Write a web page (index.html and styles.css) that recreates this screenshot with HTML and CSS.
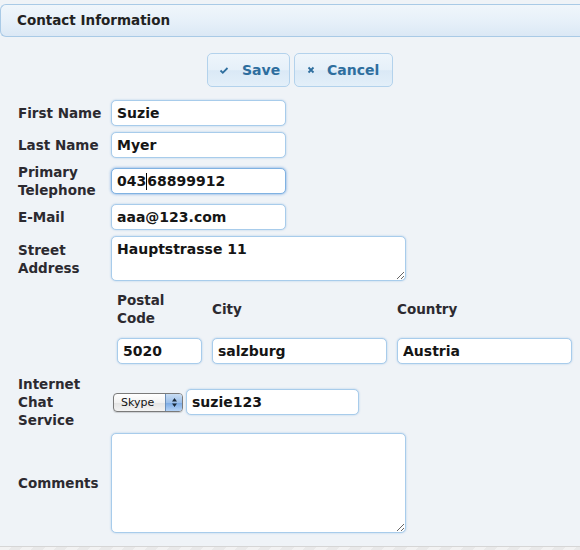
FILE: index.html
```html
<!DOCTYPE html>
<html>
<head>
<meta charset="utf-8">
<link rel="stylesheet" href="styles.css">
</head>
<body>
<div class="header">Contact Information</div>
<div class="toolbar">
  <button class="btn save"><svg class="ico" width="16" height="16" viewBox="0 0 16 16"><path d="M4.5 8.5 L6.8 10.8 L11.5 6" fill="none" stroke="#2e6e9e" stroke-width="1.8"/></svg><span>Save</span></button>
  <button class="btn cancel"><svg class="ico" width="16" height="16" viewBox="0 0 16 16"><path d="M5.5 5.5 L10.5 10.5 M10.5 5.5 L5.5 10.5" fill="none" stroke="#2e6e9e" stroke-width="1.8"/></svg><span>Cancel</span></button>
</div>
<form class="form">
  <div class="row"><label class="label">First Name</label><input class="field" value="Suzie"></div>
  <div class="row"><label class="label">Last Name</label><input class="field" value="Myer"></div>
  <div class="row r2"><label class="label">Primary<br>Telephone</label><div class="field focus">043<span class="caret"></span>68899912</div></div>
  <div class="row"><label class="label">E-Mail</label><input class="field" value="aaa@123.com"></div>
  <div class="row"><label class="label">Street<br>Address</label><textarea class="area short">Hauptstrasse 11</textarea></div>
  <div class="address">
    <label class="sublabel">Postal<br>Code</label>
    <label class="sublabel">City</label>
    <label class="sublabel">Country</label>
    <input class="field wide" value="5020">
    <input class="field wide" value="salzburg">
    <input class="field wide" value="Austria">
  </div>
  <div class="row rchat"><label class="label">Internet<br>Chat<br>Service</label>
    <div class="chat">
      <div class="select"><span class="sel-text">Skype</span><span class="sel-arrows"><svg width="7" height="11" viewBox="0 0 7 11"><path d="M3.5 1 L6 4.5 L1 4.5 Z M3.5 10 L6 6.5 L1 6.5 Z" fill="#1a2a3a"/></svg></span></div>
      <input class="field chatfield" value="suzie123">
    </div>
  </div>
  <div class="row"><label class="label">Comments</label><textarea class="area tall"></textarea></div>
</form>
<div class="footer"></div>
</body>
</html>
```
FILE: styles.css
```css
html, body {
  margin: 0;
  padding: 0;
  background: #eff3f7;
  overflow: hidden;
  font-family: "DejaVu Sans", Verdana, sans-serif;
}
body {
  padding-top: 4px;
}
.header {
  height: 31px;
  line-height: 31px;
  border: 1px solid #a9cae6;
  border-right: none;
  border-radius: 6px 0 0 6px;
  background: linear-gradient(#f0f6fb, #e6f0f9 55%, #dbe8f5);
  padding-left: 16px;
  font-weight: bold;
  font-size: 13.5px;
  color: #222;
}
.toolbar {
  display: flex;
  justify-content: center;
  gap: 4px;
  margin-top: 16px;
  padding-left: 20px;
}
.btn {
  box-sizing: border-box;
  height: 34px;
  display: flex;
  align-items: center;
  gap: 10px;
  padding: 0 0 0 8px;
  border: 1px solid #b3d2ec;
  border-radius: 5px;
  background: linear-gradient(#eef5fb, #e6f0f9 50%, #dae9f6 52%, #e3eff9);
  font-family: "DejaVu Sans", Verdana, sans-serif;
  font-weight: bold;
  font-size: 14px;
  color: #2e6e9e;
}
.save {
  width: 83px;
  padding-left: 8px;
}
.cancel {
  width: 99px;
  padding-left: 8px;
  gap: 8px;
}
.ico {
  display: block;
  flex: none;
}
.form {
  margin-top: 10px;
}
.row {
  display: flex;
  align-items: center;
  padding: 3px 0;
}
.row.r2 {
  padding: 2px 0;
}
.row.rchat {
  padding: 3px 0 1px;
}
.label {
  width: 93px;
  padding-left: 18px;
  flex: none;
  font-weight: bold;
  font-size: 13.5px;
  line-height: 18px;
  color: #2c2a30;
}
.field {
  box-sizing: border-box;
  width: 175px;
  height: 26px;
  padding: 0 5px;
  margin: 0;
  border: 1px solid #a8cceb;
  border-radius: 5px;
  background: #fff;
  box-shadow: 0 0 2px rgba(120, 170, 220, 0.6);
  font-family: "DejaVu Sans", Verdana, sans-serif;
  font-weight: bold;
  font-size: 14px;
  color: #151515;
  outline: none;
}
div.field {
  display: flex;
  align-items: center;
}
.focus {
  border-color: #80b2e2;
  box-shadow: 0 0 3px rgba(90, 150, 220, 0.9);
}
.caret {
  display: inline-block;
  width: 1px;
  height: 17px;
  background: #000;
}
.area {
  box-sizing: border-box;
  width: 295px;
  margin: 0;
  padding: 4px 5px;
  border: 1px solid #a8cceb;
  border-radius: 5px;
  background: #fff;
  box-shadow: 0 0 2px rgba(120, 170, 220, 0.6);
  font-family: "DejaVu Sans", Verdana, sans-serif;
  font-weight: bold;
  font-size: 14px;
  color: #151515;
  outline: none;
}
.short {
  height: 45px;
}
.tall {
  height: 100px;
}
.address {
  display: grid;
  grid-template-columns: 85px 175px 175px;
  column-gap: 10px;
  row-gap: 11px;
  align-items: center;
  padding: 7px 0 8px 117px;
}
.sublabel {
  font-weight: bold;
  font-size: 13.5px;
  line-height: 18px;
  color: #2c2a30;
}
.field.wide {
  width: 100%;
}
.chat {
  display: flex;
  align-items: center;
  gap: 3px;
  margin-left: 2px;
}
.select {
  box-sizing: border-box;
  width: 70px;
  height: 19px;
  display: flex;
  border: 1px solid #7a7a7a;
  border-radius: 4px;
  overflow: hidden;
  background: linear-gradient(#ffffff, #f2f2f2 50%, #e4e4e4 52%, #f3f3f3);
  box-shadow: 0 1px 1px rgba(0, 0, 0, 0.15);
}
.sel-text {
  flex: 1;
  padding-left: 7px;
  font-family: "DejaVu Sans", Verdana, sans-serif;
  font-size: 11px;
  line-height: 17px;
  color: #111;
}
.sel-arrows {
  width: 16px;
  display: flex;
  align-items: center;
  justify-content: center;
  border-left: 1px solid #6c8fb8;
  background: linear-gradient(#c9ddf3, #9dc0ea 50%, #7aa9e3 52%, #b5d3f6);
}
.chatfield {
  width: 173px;
}
.footer {
  margin-top: 10px;
  height: 10px;
  border-top: 1px solid #d6d6d6;
  background: repeating-linear-gradient(135deg, #f2f2f2 0 8px, #e9e9e9 8px 16px);
}
```
